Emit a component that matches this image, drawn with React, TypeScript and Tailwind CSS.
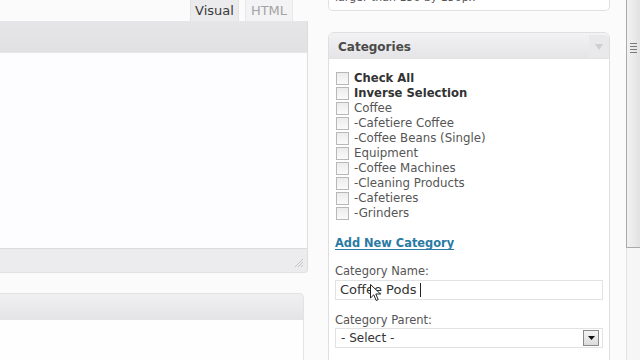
import React from "react";

const cats: { t: string; b?: boolean }[] = [
  { t: "Check All", b: true },
  { t: "Inverse Selection", b: true },
  { t: "Coffee" },
  { t: "-Cafetiere Coffee" },
  { t: "-Coffee Beans (Single)" },
  { t: "Equipment" },
  { t: "-Coffee Machines" },
  { t: "-Cleaning Products" },
  { t: "-Cafetieres" },
  { t: "-Grinders" },
];

function Checkbox() {
  return (
    <span className="w-[13px] h-[13px] shrink-0 border border-[#b8b8b8] bg-gradient-to-b from-[#ececec] to-[#fafafa]" />
  );
}

export default function App() {
  return (
    <div className="relative w-[640px] h-[360px] overflow-hidden bg-[#fbfbfc] flex font-['DejaVu_Sans',sans-serif]">
      {/* Left column */}
      <div className="w-[308px] shrink-0 flex flex-col">
        {/* tabs */}
        <div className="h-[22px] flex justify-end items-stretch gap-[6px] pr-[15px]">
          <div className="w-[49px] bg-[#ebeaec] border-x border-[#e2e2e2] flex items-center justify-center text-[13px] text-[#3a3a3a] pt-[1px]">
            Visual
          </div>
          <div className="w-[48px] bg-[#f3f2f4] border-x border-[#e8e8e8] flex items-center justify-center text-[13px] text-[#a3a3a3] pt-[1px]">
            HTML
          </div>
        </div>
        {/* toolbar */}
        <div className="h-[35px] bg-gradient-to-b from-[#e6e5e7] to-[#e1e0e2] border-r border-[#dcdcdc] border-b border-b-[#e6e6e6]" />
        {/* editor */}
        <div className="h-[208px] bg-[#fdfcfe] border-r border-[#dedede]" />
        {/* status bar */}
        <div className="relative h-[27px] bg-[#ecebed] border-t border-[#dcdcdc] border-r border-b border-r-[#dedede] border-b-[#e2e2e2] rounded-br-[4px]">
          <svg className="absolute right-[3px] bottom-[4px]" width="10" height="10" viewBox="0 0 10 10">
            <path d="M9 1 L1 9 M9 4 L4 9 M9 7 L7 9" stroke="#c4c4c4" strokeWidth="1" />
          </svg>
        </div>
        {/* next box */}
        <div className="mt-[20px] w-[304px] flex flex-col">
          <div className="h-[27px] bg-gradient-to-b from-[#f0eff1] to-[#e4e3e5] border-t border-r border-[#e2e2e2] rounded-tr-[5px]" />
          <div className="h-[40px] bg-[#fefefe] border-r border-[#e4e4e4]" />
        </div>
      </div>

      {/* gap */}
      <div className="w-[20px] shrink-0" />

      {/* Right column */}
      <div className="w-[282px] shrink-0 flex flex-col">
        <div className="-mt-[9px] bg-white border-x border-b border-[#e0e0e0] rounded-b-[5px] px-[6px] pb-[6px]">
          <div className="text-[11px] leading-[13px] text-[#555]">larger than 150 by 150px</div>
        </div>

        <div className="mt-[21px] border border-[#dfdfdf] rounded-t-[6px] bg-white flex flex-col">
          <div className="h-[26px] bg-gradient-to-b from-[#f2f1f3] to-[#e5e4e6] rounded-t-[5px] flex items-center pl-[9px] pt-[2px] border-b border-[#e3e3e3]">
            <span className="text-[12px] font-bold text-[#4a4a4a] flex-1">Categories</span>
            <div className="w-[20px] h-full flex items-center justify-center bg-[#e9e8ea] rounded-tr-[5px]">
              <svg width="8" height="6" viewBox="0 0 8 6">
                <path d="M0 0 L8 0 L4 6 Z" fill="#cfcfcf" />
              </svg>
            </div>
          </div>

          <div className="px-[6px] pt-[12px] pb-[20px] flex flex-col">
            <div className="pl-[1px] flex flex-col">
              {cats.map((c) => (
                <div key={c.t} className="h-[15px] flex items-center gap-[5px]">
                  <Checkbox />
                  <span
                    className={
                      c.b
                        ? "text-[11.6px] leading-[15px] font-bold text-[#333]"
                        : "text-[11.8px] leading-[15px] text-[#555]"
                    }
                  >
                    {c.t}
                  </span>
                </div>
              ))}
            </div>

            <div className="mt-[15px] text-[11.4px] leading-[15px] font-bold text-[#2a7aa3] underline underline-offset-[2px]">
              Add New Category
            </div>

            <div className="mt-[13px] text-[11.5px] leading-[15px] text-[#555]">Category Name:</div>
            <div className="mt-[1px] h-[20px] border border-[#e2e2e2] bg-white flex items-center pl-[4px]">
              <span className="text-[13px] text-[#333] leading-[16px]">Coffee Pods</span>
              <span className="ml-[4px] w-[1px] h-[14px] bg-[#222]" />
            </div>

            <div className="mt-[13px] text-[11.5px] leading-[15px] text-[#555]">Category Parent:</div>
            <div className="h-[20px] border border-[#e2e2e2] bg-white flex items-center pl-[5px] pr-[3px]">
              <span className="text-[12px] text-[#333] flex-1">- Select -</span>
              <div className="w-[16px] h-[16px] border border-[#8a8a8a] bg-gradient-to-b from-[#f4f4f4] to-[#dcdcdc] flex items-center justify-center">
                <svg width="7" height="4" viewBox="0 0 7 4">
                  <path d="M0 0 L7 0 L3.5 4 Z" fill="#111" />
                </svg>
              </div>
            </div>
          </div>
        </div>
      </div>

      {/* gap */}
      <div className="w-[16px] shrink-0" />

      {/* scrollbar */}
      <div className="w-[14px] shrink-0 flex flex-col">
        <div className="h-[248px] border-l border-b border-[#a9a9a9] bg-gradient-to-r from-[#f2f2f2] to-[#e2e2e2] flex flex-col items-center pt-[43px]">
          <div className="flex flex-col gap-[2px] w-[7px]">
            <span className="h-[1px] bg-[#7a7a7a]" />
            <span className="h-[1px] bg-[#7a7a7a]" />
            <span className="h-[1px] bg-[#7a7a7a]" />
            <span className="h-[1px] bg-[#7a7a7a]" />
          </div>
        </div>
        <div className="flex-1 border-l border-[#e2e2e2] bg-[#f6f6f6]" />
      </div>

      {/* mouse cursor */}
      <svg className="absolute left-[370px] top-[284px]" width="12" height="18" viewBox="0 0 12 18">
        <path d="M0.5 0.5 L0.5 14 L3.8 10.8 L6.2 16.5 L8.2 15.6 L5.8 10 L10.5 10 Z" fill="#fff" stroke="#222" strokeWidth="1" strokeLinejoin="round" />
      </svg>
    </div>
  );
}
